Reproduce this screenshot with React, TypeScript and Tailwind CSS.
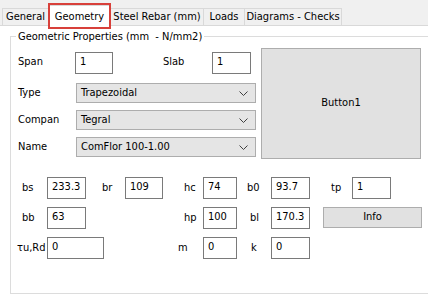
import React from "react";

const Tab = ({ label, w }: { label: string; w: string }) => (
  <div
    className={`${w} h-[17px] flex items-center justify-center border-t border-l border-r border-[#d9d9d9] bg-[#f0f0f0] -ml-px first:ml-0`}
  >
    {label}
  </div>
);

const Field = ({ value, w }: { value: string; w: string }) => (
  <div className={`${w} h-[22px] border border-[#7a7a7a] bg-white pl-[4px] flex items-center leading-none pb-[3px]`}>
    {value}
  </div>
);

const Label = ({ text, w, pl }: { text: string; w: string; pl: string }) => (
  <div className={`${w} ${pl} h-[22px] flex items-center`}>{text}</div>
);

const Combo = ({ value }: { value: string }) => (
  <div className="w-[180px] h-[20px] border border-[#adadad] bg-[#e5e5e5] flex items-center justify-between pl-[4px] pr-[7px]">
    <span>{value}</span>
    <svg width="9" height="5" viewBox="0 0 9 5">
      <polyline points="0.5,0.5 4.5,4.5 8.5,0.5" fill="none" stroke="#404040" strokeWidth="1" />
    </svg>
  </div>
);

export default function App() {
  return (
    <div className="w-[428px] h-[301px] overflow-hidden bg-white text-black text-[11px] font-['DejaVu_Sans_Condensed','DejaVu_Sans',sans-serif]">
      {/* tab strip */}
      <div className="h-[26px] bg-[#f0f0f0] border-b border-[#d9d9d9] flex items-end pl-[2px]">
        <Tab label="General" w="w-[47px]" />
        <div className="relative w-[63px] h-[21px] -mb-px -ml-px bg-white border-t border-l border-r border-[#d9d9d9] flex items-start justify-center pt-[3px]">
          Geometry
          <div className="absolute left-[-1px] top-[-3px] w-[63px] h-[26px] border-2 border-[#d8403a]" />
        </div>
        <Tab label="Steel Rebar (mm)" w="w-[94px]" />
        <Tab label="Loads" w="w-[42px]" />
        <Tab label="Diagrams - Checks" w="w-[98px]" />
      </div>

      {/* page */}
      <div className="pt-[4px]">
        <fieldset className="ml-[10px] w-[430px] h-[264px] border border-[#dcdcdc]">
          <legend className="ml-[5px] px-[2px] leading-[13px]">Geometric Properties (mm&nbsp; - N/mm2)</legend>

          <div className="flex items-start mt-[5px]">
            <div className="w-[250px] pt-[4px]">
              <div className="flex items-center h-[21px]">
                <Label text="Span" w="w-[64px]" pl="pl-[7px]" />
                <Field value="1" w="w-[38px]" />
                <Label text="Slab" w="w-[99px]" pl="pl-[50px]" />
                <Field value="1" w="w-[39px]" />
              </div>
              <div className="flex items-center mt-[10px]">
                <div className="w-[65px] pl-[7px]">Type</div>
                <Combo value="Trapezoidal" />
              </div>
              <div className="flex items-center mt-[7px]">
                <div className="w-[65px] pl-[7px]">Compan</div>
                <Combo value="Tegral" />
              </div>
              <div className="flex items-center mt-[7px]">
                <div className="w-[65px] pl-[7px]">Name</div>
                <Combo value="ComFlor 100-1.00" />
              </div>
            </div>
            <button className="w-[160px] h-[111px] bg-[#e1e1e1] border border-[#adadad]">Button1</button>
          </div>

          <div className="flex flex-col gap-[8px] mt-[18px]">
            <div className="flex">
              <Label text="bs" w="w-[36px]" pl="pl-[11px]" />
              <Field value="233.3" w="w-[39px]" />
              <Label text="br" w="w-[39px]" pl="pl-[16px]" />
              <Field value="109" w="w-[38px]" />
              <Label text="hc" w="w-[40px]" pl="pl-[21px]" />
              <Field value="74" w="w-[34px]" />
              <Label text="b0" w="w-[34px]" pl="pl-[10px]" />
              <Field value="93.7" w="w-[39px]" />
              <Label text="tp" w="w-[42px]" pl="pl-[21px]" />
              <Field value="1" w="w-[39px]" />
            </div>
            <div className="flex">
              <Label text="bb" w="w-[36px]" pl="pl-[11px]" />
              <Field value="63" w="w-[39px]" />
              <Label text="hp" w="w-[117px]" pl="pl-[98px]" />
              <Field value="100" w="w-[34px]" />
              <Label text="bl" w="w-[34px]" pl="pl-[13px]" />
              <Field value="170.3" w="w-[39px]" />
              <div className="w-[13px]" />
              <button className="w-[99px] h-[21px] bg-[#e1e1e1] border border-[#adadad]">Info</button>
            </div>
            <div className="flex">
              <Label text="τu,Rd" w="w-[36px]" pl="pl-[6px]" />
              <Field value="0" w="w-[57px]" />
              <Label text="m" w="w-[99px]" pl="pl-[74px]" />
              <Field value="0" w="w-[34px]" />
              <Label text="k" w="w-[34px]" pl="pl-[14px]" />
              <Field value="0" w="w-[39px]" />
            </div>
          </div>
        </fieldset>
      </div>
    </div>
  );
}
